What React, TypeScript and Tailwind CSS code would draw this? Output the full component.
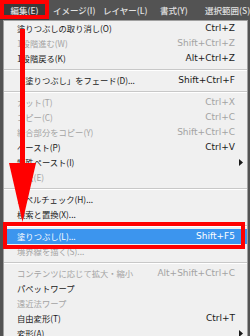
import React from "react";

type Row =
  | { k: "sep" }
  | { k: "item"; label: string; sc?: string; dis?: boolean; sub?: boolean; hl?: boolean };

const rows: Row[] = [
  { k: "item", label: "塗りつぶしの取り消し(O)", sc: "Ctrl+Z" },
  { k: "item", label: "1段階進む(W)", sc: "Shift+Ctrl+Z", dis: true },
  { k: "item", label: "1段階戻る(K)", sc: "Alt+Ctrl+Z" },
  { k: "sep" },
  { k: "item", label: "「塗りつぶし」をフェード(D)...", sc: "Shift+Ctrl+F" },
  { k: "sep" },
  { k: "item", label: "カット(T)", sc: "Ctrl+X", dis: true },
  { k: "item", label: "コピー(C)", sc: "Ctrl+C", dis: true },
  { k: "item", label: "結合部分をコピー(Y)", sc: "Shift+Ctrl+C", dis: true },
  { k: "item", label: "ペースト(P)", sc: "Ctrl+V" },
  { k: "item", label: "特殊ペースト(I)", sub: true },
  { k: "item", label: "消去(E)", dis: true },
  { k: "sep" },
  { k: "item", label: "スペルチェック(H)..." },
  { k: "item", label: "検索と置換(X)..." },
  { k: "sep" },
  { k: "item", label: "塗りつぶし(L)...", sc: "Shift+F5", hl: true },
  { k: "item", label: "境界線を描く(S)...", dis: true },
  { k: "sep" },
  { k: "item", label: "コンテンツに応じて拡大・縮小", sc: "Alt+Shift+Ctrl+C", dis: true },
  { k: "item", label: "パペットワープ" },
  { k: "item", label: "遠近法ワープ", dis: true },
  { k: "item", label: "自由変形(T)", sc: "Ctrl+T" },
  { k: "item", label: "変形(A)", sub: true },
];

const jp = { fontFamily: '"Noto Sans CJK JP", "Noto Sans", sans-serif' };
const lat = { fontFamily: '"DejaVu Sans", "Noto Sans CJK JP", sans-serif' };

export default function App() {
  return (
    <div className="relative w-[250px] h-[336px] overflow-hidden bg-[#535353]">
      {/* menu bar */}
      <div className="flex h-[20px] items-center text-[8.5px] font-medium text-[#e2e2e2]" style={jp}>
        <div className="flex h-[20px] w-[49px] shrink-0 items-center justify-center bg-[#3a3a3a] whitespace-nowrap">
          編集(E)
        </div>
        <div className="ml-[4px] w-[50px] shrink-0 whitespace-nowrap">イメージ(I)</div>
        <div className="w-[57px] shrink-0 whitespace-nowrap">レイヤー(L)</div>
        <div className="w-[45px] shrink-0 whitespace-nowrap">書式(Y)</div>
        <div className="shrink-0 whitespace-nowrap">選択範囲(S)</div>
      </div>
      {/* dropdown */}
      <div className="ml-[3px] w-[245px] border border-[#a0a0a0] bg-[#f0f0f0]">
        {rows.map((r, i) =>
          r.k === "sep" ? (
            <div key={i} className="flex h-[7px] items-center">
              <div className="h-[2px] w-full border-t border-[#c8c8c8] border-b border-b-white" />
            </div>
          ) : (
            <div
              key={i}
              className={
                "flex h-[15px] items-center pl-[13px] " +
                (r.hl ? "bg-[#3c95ee] text-white" : r.dis ? "text-[#a3a3a3]" : "text-[#1a1a1a]")
              }
            >
              <span className="flex-1 whitespace-nowrap text-[8.3px]" style={jp}>
                {r.label}
              </span>
              {r.sc && (
                <span className="whitespace-nowrap text-[9px]" style={lat}>
                  {r.sc}
                </span>
              )}
              <span className="flex w-[12px] items-center justify-center">
                {r.sub && (
                  <svg width="4" height="7" viewBox="0 0 4 7">
                    <polygon points="0,0 4,3.5 0,7" fill="#1a1a1a" />
                  </svg>
                )}
              </span>
            </div>
          )
        )}
      </div>
      {/* red box around 編集 */}
      <div className="absolute left-0 top-0 h-[19px] w-[49px] border-[4px] border-[#ff0000]" />
      {/* red box around highlighted item */}
      <div className="absolute left-[3px] top-[222px] h-[27px] w-[242px] border-[4px] border-[#ff0000]" />
      {/* red arrow */}
      <svg className="absolute left-0 top-0" width="250" height="336" viewBox="0 0 250 336">
        <rect x="20" y="29" width="5" height="136" fill="#ff0000" />
        <polygon points="9,163 36,163 22.5,222" fill="#ff0000" />
      </svg>
    </div>
  );
}
